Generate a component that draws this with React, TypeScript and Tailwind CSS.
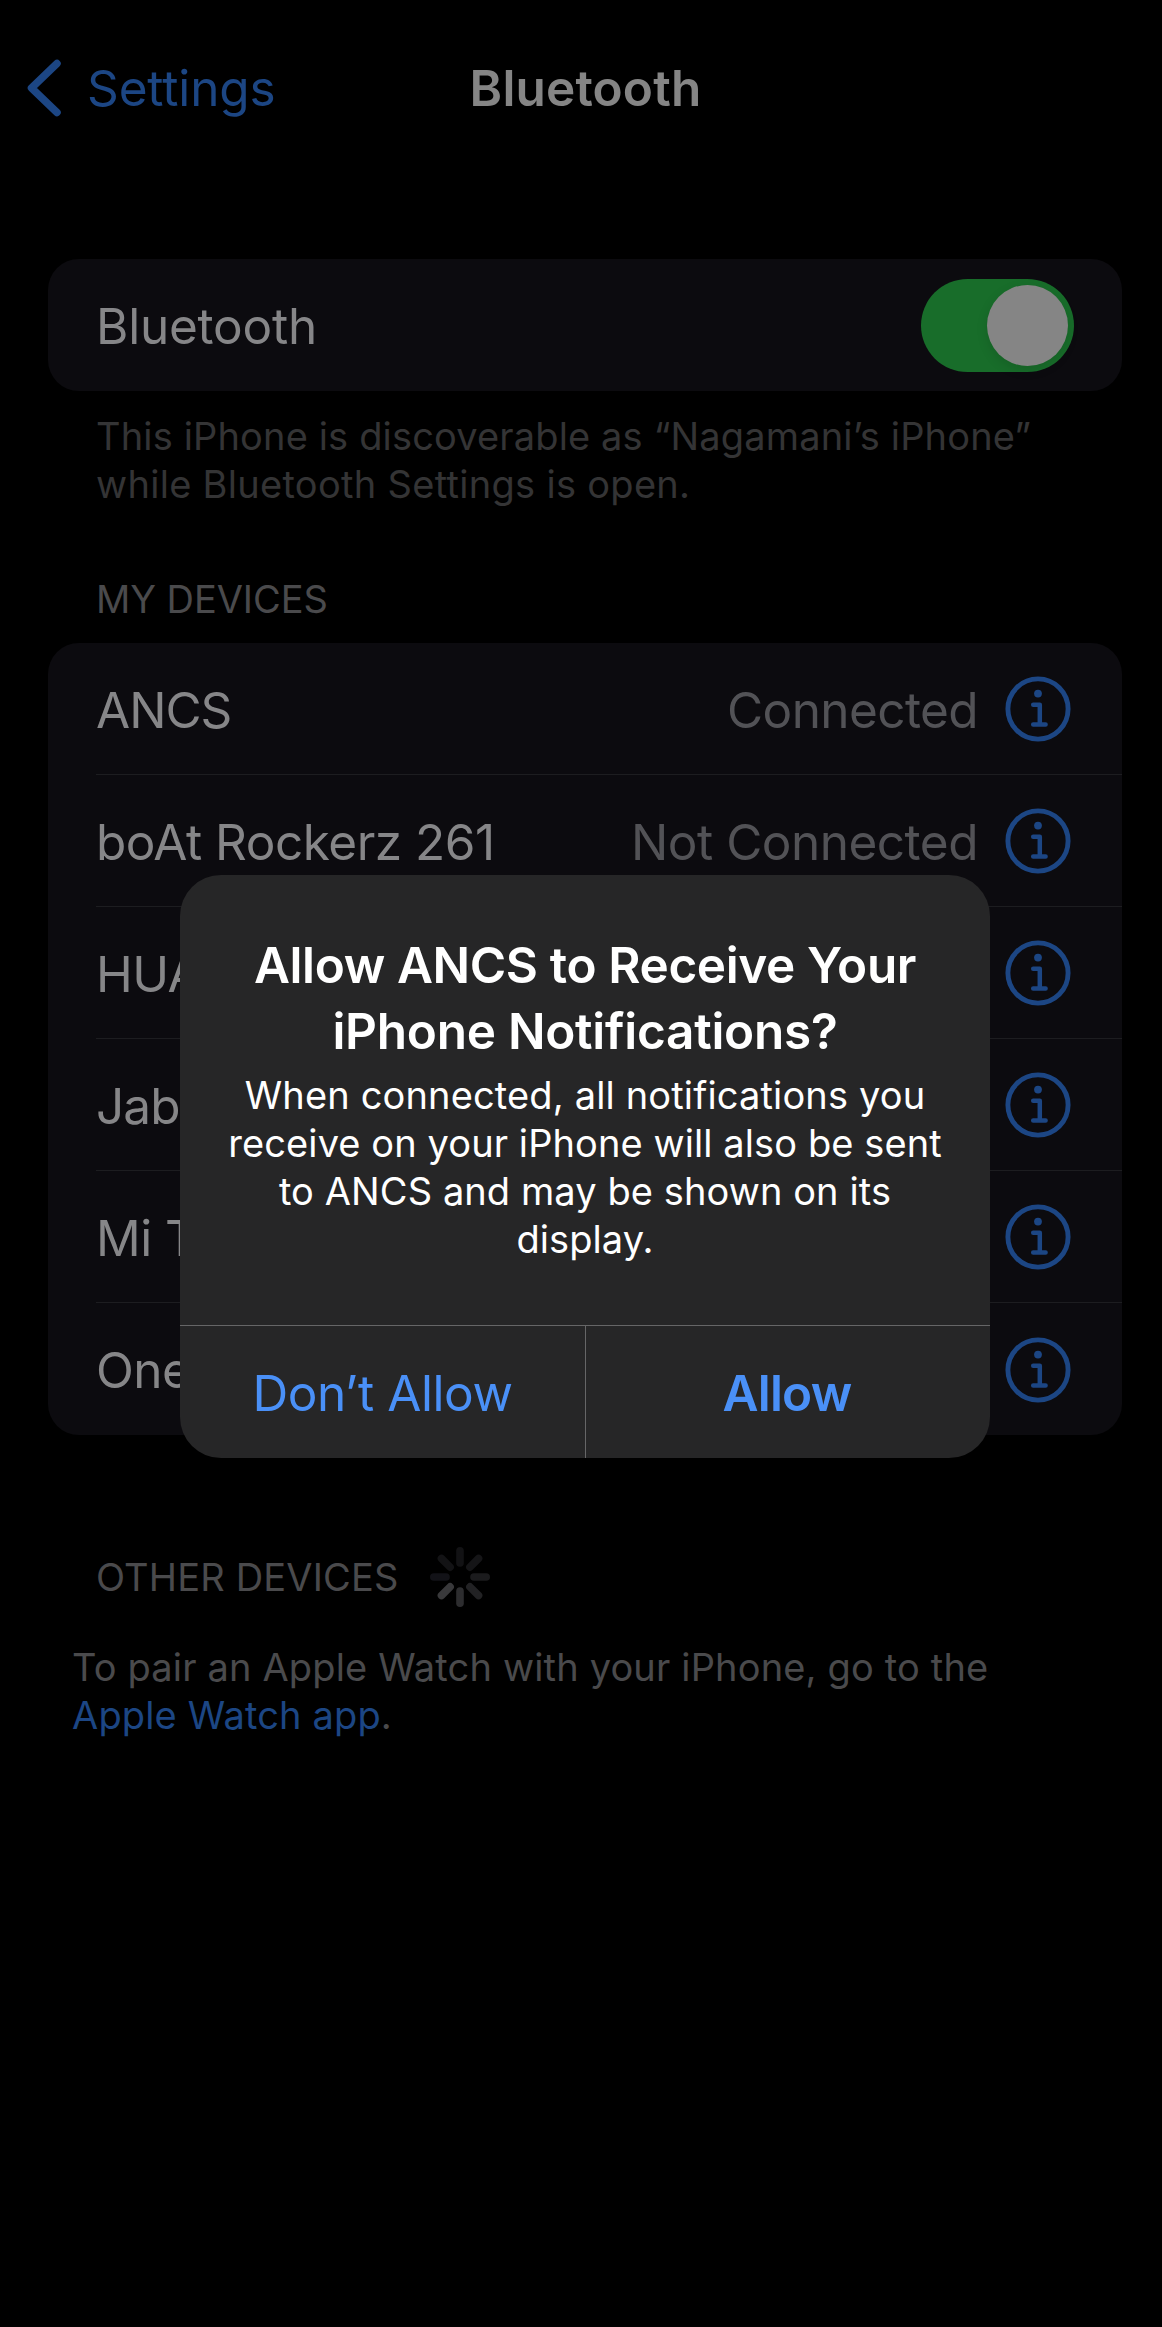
type Device = {
  name: string;
  status?: string;
  nameTracking: string;
  statusTracking?: string;
};

const devices: Device[] = [
  { name: "ANCS", status: "Connected", nameTracking: "tracking-[-1px]", statusTracking: "tracking-[-0.6px]" },
  { name: "boAt Rockerz 261", status: "Not Connected", nameTracking: "tracking-[-0.5px]", statusTracking: "tracking-[-0.5px]" },
  { name: "HUA", nameTracking: "tracking-[-0.6px]" },
  { name: "Jab", nameTracking: "tracking-[-0.9px]" },
  { name: "Mi T", nameTracking: "tracking-[-0.5px]" },
  { name: "One", nameTracking: "tracking-[-0.6px]" },
];

function InfoIcon() {
  return (
    <svg width="66" height="66" viewBox="0 0 66 66" fill="none" stroke="#1c4684" className="shrink-0">
      <circle cx="33" cy="33" r="30.1" strokeWidth="4.9" />
      <circle cx="33" cy="17.6" r="3.9" fill="#1c4684" stroke="none" />
      <path d="M28.2 28.8h6.6v19.4M28.2 48.6h12.4" strokeWidth="4.5" strokeLinecap="round" strokeLinejoin="round" />
    </svg>
  );
}

function Toggle() {
  return (
    <div className="flex h-[93px] w-[153px] items-center justify-end rounded-full bg-[#186d2a] pr-[6px]">
      <div className="size-[81px] rounded-full bg-[#858585] shadow-[0_4px_12px_rgba(0,0,0,0.12)]" />
    </div>
  );
}

const spokes = [
  { angle: 0, color: "#121214" },
  { angle: 45, color: "#151517" },
  { angle: 90, color: "#1b1b1d" },
  { angle: 135, color: "#222224" },
  { angle: 180, color: "#2d2d2f" },
  { angle: 225, color: "#39393b" },
  { angle: 270, color: "#121217" },
  { angle: 315, color: "#131315" },
];

function Spinner() {
  return (
    <svg width="62" height="62" viewBox="-31 -31 62 62" strokeWidth="7.6" strokeLinecap="round">
      {spokes.map((s) => (
        <line key={s.angle} x1="0" y1="-14" x2="0" y2="-26.2" stroke={s.color} transform={`rotate(${s.angle})`} />
      ))}
    </svg>
  );
}

function DeviceRow({ device, last }: { device: Device; last: boolean }) {
  return (
    <li
      className={`flex h-[132px] items-center pr-[51px] ${last ? "" : "border-b border-[#1d1d20]"}`}
    >
      <span className={`pt-[3px] text-[#868688] ${device.nameTracking}`}>{device.name}</span>
      {device.status && (
        <span className={`ml-auto pt-[3px] text-[#525256] ${device.statusTracking}`}>{device.status}</span>
      )}
      <span className={device.status ? "ml-[27px] pt-px" : "ml-auto pt-px"}>
        <InfoIcon />
      </span>
    </li>
  );
}

function Alert() {
  return (
    <div
      role="alertdialog"
      className="absolute left-[180px] top-[875px] flex h-[583px] w-[810px] flex-col overflow-hidden rounded-[41px] bg-[#262627] text-center text-white"
    >
      <div className="flex-1 whitespace-nowrap pt-[57px]">
        <h2 className="text-[49.5px] font-semibold leading-[66px]">
          <span className="block tracking-[-0.38px]">Allow ANCS to Receive Your</span>
          <span className="block tracking-[-0.26px]">iPhone Notifications?</span>
        </h2>
        <p className="mt-[7px] text-[38px] leading-[48px] tracking-[0.09px]">
          <span className="tracking-[0.15px]">When connected, all notifications you</span>
          <br />
          receive on your iPhone will also be sent
          <br />
          to ANCS and may be shown on its
          <br />
          display.
        </p>
      </div>
      <div className="grid h-[133px] grid-cols-2 border-t border-[#666667] text-[49.5px] text-[#4a90f7]">
        <button className="pt-[2px] tracking-[-0.43px]">Don’t Allow</button>
        <button className="border-l border-[#666667] pr-[2px] pt-[2px] font-semibold tracking-[-0.75px]">Allow</button>
      </div>
    </div>
  );
}

export default function App() {
  return (
    <div className="relative h-[2327px] w-[1162px] overflow-hidden bg-black font-['Inter',sans-serif] text-[49.5px]">
      <header className="grid h-[176px] w-[1171px] grid-cols-3 items-center">
        <a className="flex items-center text-[#1c4684]">
          <svg width="36" height="60" viewBox="0 0 36 60" fill="none" className="ml-[25px]">
            <path d="M32 5.5 6.5 30 32 54.5" stroke="#1c4684" strokeWidth="7.5" strokeLinecap="round" strokeLinejoin="round" />
          </svg>
          <span className="ml-[26px] tracking-[-0.13px]">Settings</span>
        </a>
        <h1 className="text-center font-semibold tracking-[0.16px] text-[#858585]">Bluetooth</h1>
      </header>

      <main className="flex flex-col pt-[83px]">
        <section className="ml-12 flex h-[132px] w-[1074px] items-center justify-between rounded-[31px] bg-[#0c0b0f] pl-12 pr-12">
          <span className="pt-[2px] tracking-[-0.22px] text-[#868688]">Bluetooth</span>
          <Toggle />
        </section>
        <p className="ml-[96px] mt-[21px] whitespace-nowrap text-[38px] leading-[48px] text-[#343435]">
          <span className="block tracking-[0.15px]">This iPhone is discoverable as “Nagamani’s iPhone”</span>
          <span className="block tracking-[0.3px]">while Bluetooth Settings is open.</span>
        </p>

        <h2 className="ml-[96px] mt-[67px] text-[38px] leading-[48px] tracking-[-0.07px] text-[#4a4a4c]">MY DEVICES</h2>
        <ul className="ml-12 mt-5 w-[1074px] rounded-[31px] bg-[#0c0b0f] pl-12">
          {devices.map((d, i) => (
            <DeviceRow key={d.name} device={d} last={i === devices.length - 1} />
          ))}
        </ul>

        <div className="ml-[96px] mt-[118px] flex h-12 items-center text-[38px] leading-[48px] text-[#4a4a4c]">
          <h2 className="tracking-[0.17px]">OTHER DEVICES</h2>
          <div className="ml-[30px]">
            <Spinner />
          </div>
        </div>
        <p className="ml-[72px] mt-[42px] whitespace-nowrap text-[38px] leading-[48px] tracking-[0.16px] text-[#4a4a4c]">
          To pair an Apple Watch with your iPhone, go to the
          <br />
          <a className="text-[#1c4684]">Apple Watch app</a>.
        </p>
      </main>

      <Alert />
    </div>
  );
}
